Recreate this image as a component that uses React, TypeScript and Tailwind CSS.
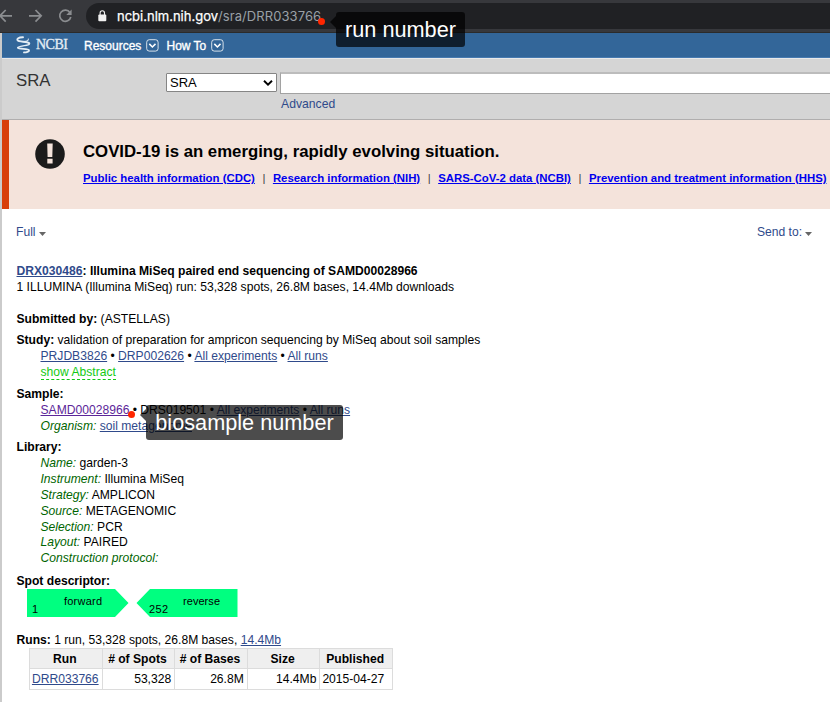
import type { ReactNode } from "react";

const linkBase = "text-[#2f4a8b] underline";

function Link({ children }: { children: ReactNode }) {
  return <a className={linkBase}>{children}</a>;
}

function Field({ label, children }: { label: string; children?: ReactNode }) {
  return (
    <div className="whitespace-nowrap">
      <i className="text-[#006400]">{label}:</i> {children}
    </div>
  );
}

function MenuBox() {
  return (
    <svg width="13" height="13" viewBox="0 0 13 13" fill="none" stroke="#fff" className="shrink-0">
      <rect x="0.7" y="0.7" width="11.4" height="11.4" rx="2.6" strokeOpacity="0.8" />
      <path d="M3.3 4.9 6.4 8l3.1-3.1" strokeWidth="1.5" />
    </svg>
  );
}

function BrowserBar() {
  return (
    <div className="flex h-[33px] shrink-0 border-b border-[#2b2b2b] bg-[#37383c] pt-[3px]">
      <svg width="86" height="26" viewBox="0 0 86 26" fill="none" stroke="#8b8d90" strokeWidth="1.7" className="shrink-0">
        <path d="M12 12.8H.5M5.7 7 0 12.8l5.7 5.8" />
        <path d="M29 12.8h12M35.5 7l5.7 5.8-5.7 5.8" />
        <path d="M70 9.6A5.6 5.6 0 1 0 70.8 14" />
        <path d="M71.6 6.6v5.3h-5.3z" fill="#8b8d90" stroke="none" />
      </svg>
      <div className="flex h-[26px] flex-1 items-center rounded-l-full bg-[#202124] pl-[12px]">
        <svg width="9" height="12" viewBox="0 0 9 12" className="mr-[10px] shrink-0">
          <rect x="0.3" y="4.4" width="8" height="6.8" rx="1" fill="#f1f1f1" />
          <path d="M2.1 5V2.9a2.2 2.2 0 0 1 4.4 0V5" fill="none" stroke="#f1f1f1" strokeWidth="1.1" />
        </svg>
        <div className="font-['Inter',sans-serif] text-[13px] leading-[26px] whitespace-nowrap text-[#9aa0a6]">
          <span className="text-white [-webkit-text-stroke:0.25px_white]">ncbi.nlm.nih.gov</span>
          <span className="tracking-[0.08px]">/sra/DRR033766</span>
        </div>
      </div>
    </div>
  );
}

function NcbiBar() {
  return (
    <div className="flex h-[25px] shrink-0 items-center border-b border-[#477ab0] bg-[#336699] pl-[14px] text-white">
      <svg width="16" height="18" viewBox="0 0 16 18" fill="none" stroke="#e4edf5" strokeLinecap="round" className="mt-[-1px]">
        <path d="M7 1.300C2.500 1.200.6 2.800 1.600 4.300 3 6.400 11.500 5 13.300 7.400" strokeWidth="1.900" />
        <path d="M7.500 5.500C10 5.600 12.800 5 12.300 3" strokeWidth="1.100" />
        <path d="M13.300 7.400C14.300 10 4 9.200 2 11.700" strokeWidth="1.300" />
        <path d="M2 11.700C2.800 13.600 12.400 12 13 14.300 13.200 15.600 10.600 16.400 8 16.400" strokeWidth="1.900" />
      </svg>
      <span className="ml-[4px] w-[33px] font-['Liberation_Serif',serif] text-[14px] leading-[18px] tracking-[-0.5px] text-[#e4edf5] [-webkit-text-stroke:0.3px_#e4edf5]">NCBI</span>
      <span className="mt-[2px] mr-[4px] ml-[15px] w-[58px] text-[12px] [-webkit-text-stroke:0.35px_white]">Resources</span>
      <MenuBox />
      <span className="mt-[2px] mr-[4px] ml-[7.5px] w-[40px] text-[12px] whitespace-nowrap [-webkit-text-stroke:0.35px_white]">How To</span>
      <MenuBox />
    </div>
  );
}

function SearchHeader() {
  return (
    <div className="flex h-[62px] shrink-0 items-start border-t border-b border-t-[#e9e9e9] border-b-[#b0aeae] bg-[#d5d5d5] pl-[14px]">
      <span className="mt-[12px] w-[150px] text-[16.8px] leading-[20px] text-[#333]">SRA</span>
      <div className="mt-[14px] flex h-[19px] w-[111px] shrink-0 items-center justify-between rounded-[1px] border border-[#858585] bg-white pr-[3px] pl-[3px] text-[13px] text-black">
        SRA
        <svg width="10" height="6" viewBox="0 0 10 6" fill="none" stroke="#000" strokeWidth="1.900">
          <path d="m1 .8 4 3.900L9 .8" />
        </svg>
      </div>
      <div className="mt-[13px] ml-[3px] flex-1">
        <div className="h-[22px] border border-t-2 border-r-0 border-[#a2a2a2] border-t-[#bcbcbc] bg-white" />
        <div className="mt-[1px] pl-[1px] text-[12.2px] leading-[18px] text-[#2f4a8b]">Advanced</div>
      </div>
    </div>
  );
}

function CovidBanner() {
  const cls = "text-[#0000ee] underline";
  const bar = "w-[18px] shrink-0 text-center font-normal text-[#444]";
  return (
    <div className="flex h-[89px] shrink-0 border-l-[7px] border-[#d83f0b] bg-[#f4e3db] text-black">
      <svg width="30" height="30" viewBox="0 0 30 30" className="mt-[19px] ml-[26px] shrink-0">
        <circle cx="15" cy="15" r="14.800" fill="#1b1b1b" />
        <path d="M12.200 4.400h5.500l-.4 13.600h-4.700zM12.300 19.800h5.300v4.700h-5.300z" fill="#f4e3db" />
      </svg>
      <div className="mt-[21px] ml-[18px] whitespace-nowrap">
        <div className="text-[16.78px] leading-[22px] font-bold">COVID-19 is an emerging, rapidly evolving situation.</div>
        <div className="mt-[7px] flex text-[11.38px] leading-[16px] font-bold">
          <a className={cls}>Public health information (CDC)</a>
          <span className={bar}>|</span>
          <a className={cls}>Research information (NIH)</a>
          <span className={bar}>|</span>
          <a className={cls}>SARS-CoV-2 data (NCBI)</a>
          <span className={bar}>|</span>
          <a className={cls}>Prevention and treatment information (HHS)</a>
        </div>
      </div>
    </div>
  );
}

function Caret() {
  return (
    <svg width="7" height="4" viewBox="0 0 7 4" className="mt-[3px] ml-[3px]">
      <path d="M0 0h7L3.500 4z" fill="#666" />
    </svg>
  );
}

function RunsTable() {
  const th = "border border-[#dcdcdc] bg-[#efefef] p-0 pr-[2px] text-center font-bold";
  const td = "border border-[#dcdcdc] p-0 pr-[3px] text-right";
  return (
    <table className="ml-[12.5px] w-[364px] table-fixed border-collapse leading-[16px] whitespace-nowrap">
      <thead>
        <tr className="h-[20px]">
          {["Run", "# of Spots", "# of Bases", "Size", "Published"].map((name) => (
            <th key={name} className={th}>{name}</th>
          ))}
        </tr>
      </thead>
      <tbody>
        <tr className="h-[21px]">
          <td className={td}><Link>DRR033766</Link></td>
          <td className={td}>53,328</td>
          <td className={td}>26.8M</td>
          <td className={td}>14.4Mb</td>
          <td className="border border-[#dcdcdc] p-0 pl-[2px] text-left">2015-04-27</td>
        </tr>
      </tbody>
    </table>
  );
}

function Callout({ className, label }: { className: string; label: string }) {
  return (
    <div className={`absolute flex ${className}`}>
      <span className="mt-[6px] mr-[5px] h-[7px] w-[7px] shrink-0 rounded-full bg-[#ff2600]" />
      <svg width="6" height="12" viewBox="0 0 6 12" className="mt-[4px] shrink-0">
        <path d="M6 0v12L0 6z" fill="#000" fillOpacity="0.7" />
      </svg>
      <span className="flex h-[35px] flex-1 items-center justify-center rounded-[3px] bg-black/70 text-[21.7px] text-white">{label}</span>
    </div>
  );
}

export default function App() {
  return (
    <div className="relative flex h-[702px] w-[830px] flex-col overflow-hidden bg-white font-['Liberation_Sans',Arial,sans-serif] text-[12.11px] leading-[16px] text-black">
      <BrowserBar />
      <div className="flex flex-1 flex-col border-l-2 border-[#cbcbcb]">
        <NcbiBar />
        <SearchHeader />
        <CovidBanner />
        <div className="mt-[15px] flex justify-between pr-[18px] pl-[14px] text-[#2f4a8b]">
          <div className="flex items-center">Full<Caret /></div>
          <div className="flex items-center">Send to:<Caret /></div>
        </div>
        <main className="mt-[22.5px] pl-[14.5px] whitespace-nowrap">
          <div className="font-bold"><Link>DRX030486</Link>: Illumina MiSeq paired end sequencing of SAMD00028966</div>
          <div>1 ILLUMINA (Illumina MiSeq) run: 53,328 spots, 26.8M bases, 14.4Mb downloads</div>
          <div className="mt-[16.5px]"><b>Submitted by:</b> (ASTELLAS)</div>
          <section className="mt-[5px]">
            <div><b>Study:</b> validation of preparation for ampricon sequencing by MiSeq about soil samples</div>
            <div className="pl-[24px]">
              <div><Link>PRJDB3826</Link> • <Link>DRP002626</Link> • <Link>All experiments</Link> • <Link>All runs</Link></div>
              <div><span className="border-b border-dashed border-[#14c914] text-[#14c914]">show Abstract</span></div>
            </div>
          </section>
          <section className="mt-[6px]">
            <b>Sample:</b>
            <div className="pl-[24px]">
              <div><a className="text-[#5c2699] underline">SAMD00028966</a> • DRS019501 • <Link>All experiments</Link> • <Link>All runs</Link></div>
              <Field label="Organism"><Link>soil metagenome</Link></Field>
            </div>
          </section>
          <section className="mt-[5px]">
            <b>Library:</b>
            <div className="pl-[24px]">
              <Field label="Name">garden-3</Field>
              <Field label="Instrument">Illumina MiSeq</Field>
              <Field label="Strategy">AMPLICON</Field>
              <Field label="Source">METAGENOMIC</Field>
              <Field label="Selection">PCR</Field>
              <div className="leading-[15.5px]">
                <Field label="Layout">PAIRED</Field>
                <Field label="Construction protocol" />
              </div>
            </div>
          </section>
          <section className="mt-[7px]">
            <b>Spot descriptor:</b>
            <svg width="212" height="28" viewBox="0 0 212 28" className="ml-[10.5px] block" fontSize="11">
              <path d="M0 0h88l13.500 14L88 28H0zM210.500 0h-87.500l-13.500 14L123 28h87.500z" fill="#00ff80" />
              <text x="37" y="16" textLength="38">forward</text>
              <text x="5" y="24">1</text>
              <text x="156" y="16" textLength="37">reverse</text>
              <text x="122" y="24" textLength="19">252</text>
            </svg>
          </section>
          <div className="mt-[15px]"><b>Runs:</b> 1 run, 53,328 spots, 26.8M bases, <Link>14.4Mb</Link></div>
          <RunsTable />
        </main>
      </div>
      <Callout className="top-[12px] left-[318px] w-[147px]" label="run number" />
      <Callout className="top-[405px] left-[128px] w-[215px]" label="biosample number" />
    </div>
  );
}
